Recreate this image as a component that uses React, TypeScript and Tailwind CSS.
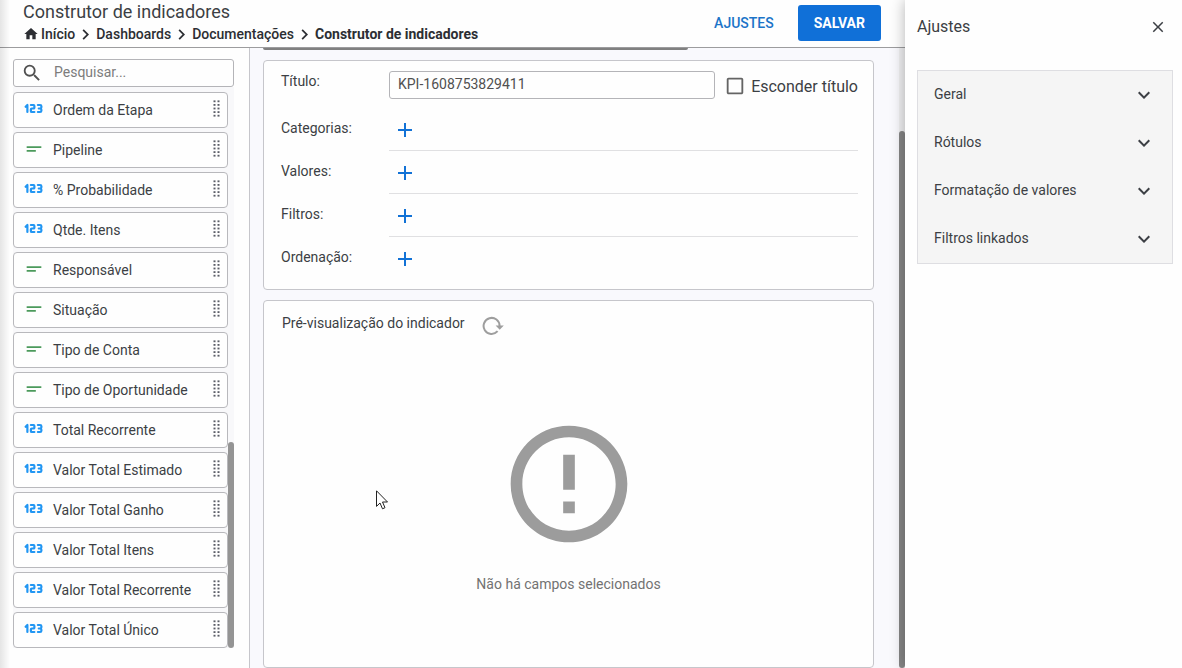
import type { ReactNode } from "react";
import { MdAdd, MdCheckBoxOutlineBlank, MdChevronRight, MdClose, MdErrorOutline, MdExpandMore, MdHome, MdSearch, MdShortText } from "react-icons/md";
import { TbNumber123 } from "react-icons/tb";

type Field = { name: string; kind: "number" | "text" };

const fields: Field[] = [
  { name: "Ordem da Etapa", kind: "number" },
  { name: "Pipeline", kind: "text" },
  { name: "% Probabilidade", kind: "number" },
  { name: "Qtde. Itens", kind: "number" },
  { name: "Responsável", kind: "text" },
  { name: "Situação", kind: "text" },
  { name: "Tipo de Conta", kind: "text" },
  { name: "Tipo de Oportunidade", kind: "text" },
  { name: "Total Recorrente", kind: "number" },
  { name: "Valor Total Estimado", kind: "number" },
  { name: "Valor Total Ganho", kind: "number" },
  { name: "Valor Total Itens", kind: "number" },
  { name: "Valor Total Recorrente", kind: "number" },
  { name: "Valor Total Único", kind: "number" },
];

const slots = ["Categorias", "Valores", "Filtros", "Ordenação"];
const crumbs = ["Início", "Dashboards", "Documentações"];
const settings = ["Geral", "Rótulos", "Formatação de valores", "Filtros linkados"];

function DragHandle() {
  return (
    <svg width="7" height="17" viewBox="0 0 7 17" fill="#5a5d66" className="mb-[3px]" aria-hidden="true">
      {[0.4, 4, 7.6, 11.2, 14.8].map((y) =>
        [0.5, 4.5].map((x) => <rect key={`${x}-${y}`} x={x} y={y} width="2" height="1.8" />)
      )}
    </svg>
  );
}

function RefreshIcon() {
  return (
    <svg width="22" height="20" viewBox="0 0 22 20" fill="none" aria-hidden="true">
      <path d="M15.6 15.2A8 8 0 1 1 17.6 10" stroke="#9e9e9e" strokeWidth="2" />
      <path d="M13.6 9.4H21.8L17.7 13.8Z" fill="#9e9e9e" />
    </svg>
  );
}

function Card({ children, className }: { children: ReactNode; className: string }) {
  return <section className={`rounded border border-[#c6c6cb] bg-[#fefefe] ${className}`}>{children}</section>;
}

function Header() {
  return (
    <header className="flex h-12 shrink-0 items-start justify-between border-b border-[#9c9c9e] bg-[#fefefe] pl-[23px] pr-6">
      <div>
        <h1 className="text-lg leading-6">Construtor de indicadores</h1>
        <nav aria-label="Trilha" className="flex h-5 items-center text-sm font-medium leading-5 text-[#2c2e33]">
          <MdHome size={16} className="mr-0.5" />
          {crumbs.map((crumb) => (
            <span key={crumb} className="flex h-5 items-center">
              <a href="#">{crumb}</a>
              <MdChevronRight size={21} />
            </span>
          ))}
          <span className="font-bold">Construtor de indicadores</span>
        </nav>
      </div>
      <div className="flex items-center gap-6 pt-[5px] text-sm">
        <button type="button" className="font-medium text-[#1c74c8]">AJUSTES</button>
        <button type="button" className="h-9 rounded-[3px] bg-[#1070d8] px-4 font-bold text-white">SALVAR</button>
      </div>
    </header>
  );
}

function FieldList() {
  return (
    <aside className="w-[250px] shrink-0 border-r border-[#c6c6cb] bg-[#fefefe] pl-[13px] pr-[15px] pt-[11px]">
      <label className="flex h-7 items-center rounded-[3px] border border-[#b4b4b8] pl-[7px]">
        <MdSearch size={22} className="shrink-0 text-[#505050]" />
        <input type="search" placeholder="Pesquisar..." aria-label="Pesquisar" className="ml-[11px] min-w-0 flex-1 bg-transparent pb-0.5 text-sm outline-none placeholder:text-[#7c7c7c]" />
      </label>
      <div className="flex bg-[#f8f8fa] pt-[5px]">
        <ul className="flex flex-1 flex-col gap-1">
          {fields.map((field) => (
            <li key={field.name} className="flex h-9 items-center rounded border border-[#b8b8bc] bg-[#fefefe] pl-[9px] pr-[7px] text-sm">
              <span className="mb-[3px] w-[22px]">
                {field.kind === "number" ? (
                  <TbNumber123 size={21} strokeWidth={2.5} className="text-[#2196f3]" />
                ) : (
                  <MdShortText size={22} className="text-[#4c9a5c]" />
                )}
              </span>
              <span className="ml-2 flex-1">{field.name}</span>
              <DragHandle />
            </li>
          ))}
        </ul>
        <div className="flex w-1.5 flex-col justify-end">
          <div className="h-[206px] rounded-full bg-[#949494]" />
        </div>
      </div>
    </aside>
  );
}

function Builder() {
  return (
    <main className="flex min-w-0 flex-1 flex-col bg-[#f9f9fd] pl-[13px] pr-[25px]">
      <div className="h-0.5 w-[425px] shrink-0 rounded-b bg-[#808080]" />
      <Card className="mt-2.5 h-[230px] shrink-0 pl-[17px] pr-[15px] pt-2.5">
        <div className="flex h-7 items-center">
          <label htmlFor="title" className="mb-2 w-[108px] text-sm">Título:</label>
          <input id="title" type="text" defaultValue="KPI-1608753829411" className="h-7 min-w-0 flex-1 rounded-[3px] border border-[#b4b4b8] px-2 pb-0.5 text-sm text-[#505050] outline-none" />
          <label className="ml-[9px] flex items-center gap-[5px] pt-0.5 text-base">
            <span className="relative">
              <input type="checkbox" className="absolute inset-0 appearance-none" />
              <MdCheckBoxOutlineBlank size={22} className="text-[#646464]" />
            </span>
            <span className="pt-0.5">Esconder título</span>
          </label>
        </div>
        <div className="pt-[9px]">
          {slots.map((slot) => (
            <div key={slot} className="group flex h-[43px] text-sm">
              <span className="w-[108px] pt-2.5">{slot}:</span>
              <div className="flex flex-1 items-center border-b border-[#e0e0e2] pl-1 pt-0.5 group-last:border-transparent">
                <button type="button" aria-label={`Adicionar em ${slot}`} className="text-[#1272d6]">
                  <MdAdd size={24} />
                </button>
              </div>
            </div>
          ))}
        </div>
      </Card>
      <Card className="mt-2.5 flex min-h-[368px] flex-1 flex-col px-[18px] pt-[9px]">
        <div className="flex items-center gap-[17px] text-sm">
          <h2>Pré-visualização do indicador</h2>
          <button type="button" aria-label="Atualizar" className="mt-1.5">
            <RefreshIcon />
          </button>
        </div>
        <div className="flex flex-col items-center pt-[78px]">
          <MdErrorOutline size={140} className="text-[#9c9c9c]" />
          <p className="mt-5 text-sm text-[#727272]">Não há campos selecionados</p>
        </div>
      </Card>
    </main>
  );
}

function Settings() {
  return (
    <aside className="z-10 w-[277px] shrink-0 bg-[#fefefe] pl-3 pr-[9px] shadow-[0_0_14px_rgba(0,0,0,0.3)]">
      <div className="flex h-[70px] justify-between pt-[15px]">
        <h2 className="text-base leading-6">Ajustes</h2>
        <button type="button" aria-label="Fechar" className="mr-1.5 h-6">
          <MdClose size={18} />
        </button>
      </div>
      <div className="border border-[#dedee2] bg-[#f5f5f5]">
        {settings.map((item) => (
          <button key={item} type="button" className="flex h-12 w-full items-center justify-between px-4 text-sm">
            <span className="pb-0.5">{item}</span>
            <MdExpandMore size={24} />
          </button>
        ))}
      </div>
    </aside>
  );
}

export default function App() {
  return (
    <div className="relative flex h-screen overflow-hidden bg-[#fefefe] font-['Roboto',sans-serif] text-[#3c3f44]">
      <div className="flex min-w-0 flex-1 flex-col">
        <Header />
        <div className="flex min-h-0 flex-1">
          <FieldList />
          <Builder />
          <div className="flex w-1.5 flex-col bg-[#f0f0f2] pt-[83px]">
            <div className="flex-1 rounded-full bg-[#868686]" />
          </div>
        </div>
      </div>
      <Settings />
      <div className="pointer-events-none absolute inset-y-0 left-0 w-2.5 bg-linear-to-r from-black/10 to-transparent" />
      <svg width="13" height="20" viewBox="0 0 13 20" className="pointer-events-none absolute left-[376px] top-[490px]" aria-hidden="true">
        <path d="M.5 .8V16.4L4 13L6.5 18.8L9 17.7L6.5 12H11.5Z" fill="#fff" stroke="#222" />
      </svg>
    </div>
  );
}
